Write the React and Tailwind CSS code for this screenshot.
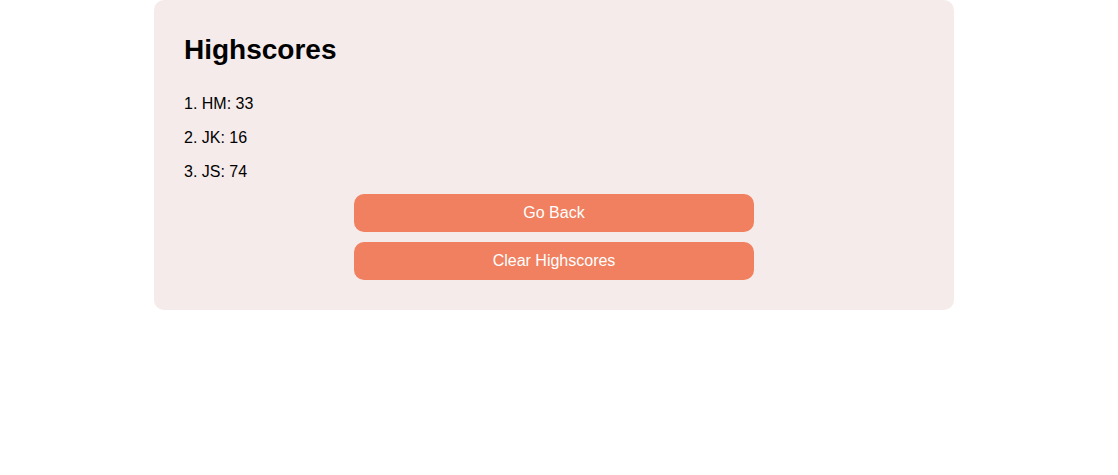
const scores = [
  { initials: "HM", score: 33 },
  { initials: "JK", score: 16 },
  { initials: "JS", score: 74 },
];

export default function App() {
  return (
    <div className="min-h-screen bg-white font-['Liberation_Sans',Arial,sans-serif] text-black">
      {/* Highscores card */}
      <div className="ml-[154px] w-[800px] rounded-[10px] bg-[#f5ebeb] px-[30px] pt-[34px] pb-[30px]">
        <h1 className="text-[28px] leading-[32px] font-bold">Highscores</h1>

        <div className="mt-[29px] flex flex-col gap-[16px]">
          {scores.map((s, i) => (
            <p key={s.initials} className="text-[16px] leading-[18px]">
              {i + 1}. {s.initials}: {s.score}
            </p>
          ))}
        </div>

        <div className="mt-[13px] flex flex-col items-center gap-[10px]">
          <button className="h-[38px] w-[400px] rounded-[10px] bg-[#f0805f] text-[16px] text-white">
            Go Back
          </button>
          <button className="h-[38px] w-[400px] rounded-[10px] bg-[#f0805f] text-[16px] text-white">
            Clear Highscores
          </button>
        </div>
      </div>
    </div>
  );
}
